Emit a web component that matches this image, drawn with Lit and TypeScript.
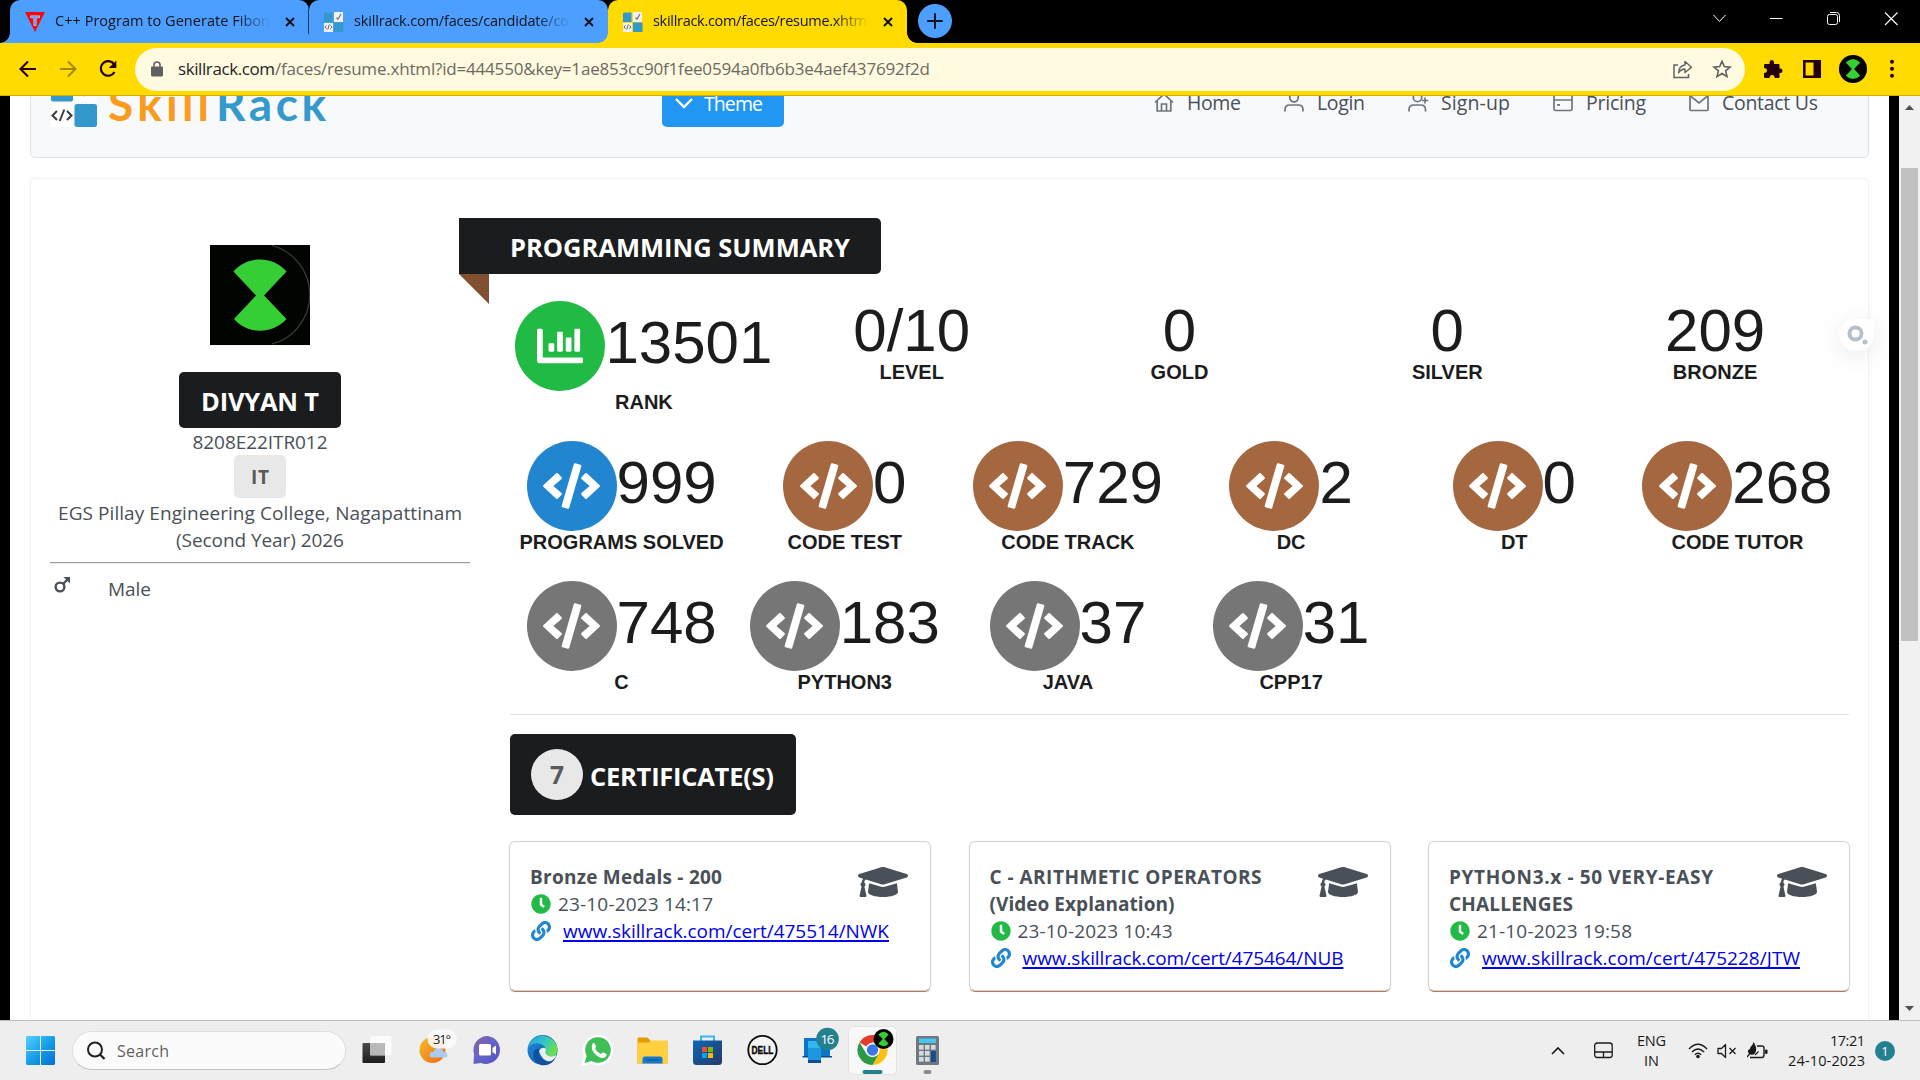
import { LitElement, html, svg, css, nothing } from "lit";
import { customElement, property } from "lit/decorators.js";

/* One line of text, spaced out or tightened to a given advance width. */
@customElement("fit-text")
class FitText extends LitElement {
  @property() text = "";
  @property({ type: Number }) width = 0;
  static styles = css`
    :host { display: inline-block; white-space: pre; }
    :host([underline]) span { text-decoration: underline; text-decoration-thickness: 2px; text-underline-offset: 2px; text-decoration-skip-ink: none; }
  `;
  render() {
    return html`<span>${this.text}</span>`;
  }
  firstUpdated() {
    const span = this.renderRoot.querySelector("span") as HTMLElement;
    const natural = span.getBoundingClientRect().width;
    const gap = (this.width - natural) / Math.max(1, this.text.length - 1);
    span.style.letterSpacing = `${gap.toFixed(3)}px`;
    span.style.marginRight = `${(-gap).toFixed(3)}px`;
  }
}

const fit = (text: string, width: number, underline = false) =>
  html`<fit-text .text=${text} .width=${width} ?underline=${underline}></fit-text>`;

const codePath =
  "M278.9 511.5l-61-17.7c-6.4-1.8-10-8.5-8.2-14.9L346.2 8.7c1.8-6.4 8.5-10 14.9-8.2l61 17.7c6.4 1.8 10 8.5 8.2 14.9L293.8 503.3c-1.9 6.4-8.5 10.1-14.9 8.2zm-114-112.2l43.5-46.4c4.6-4.9 4.3-12.7-.8-17.2L117 256l90.6-79.7c5.1-4.5 5.5-12.3.8-17.2l-43.5-46.4c-4.5-4.8-12.1-5.1-17-.5L3.8 247.2c-5.1 4.7-5.1 12.8 0 17.5l144.1 135.1c4.9 4.6 12.5 4.4 17-.5zm327.2.6l144.1-135.1c5.1-4.7 5.1-12.8 0-17.5L492.1 112.1c-4.8-4.5-12.4-4.3-17 .5L431.6 159c-4.6 4.9-4.3 12.7.8 17.2L523 256l-90.6 79.7c-5.1 4.5-5.5 12.3-.8 17.2l43.5 46.4c4.5 4.9 12.1 5.1 17 .6z";
const chartPath =
  "M332.8 320h38.4c6.4 0 12.8-6.4 12.8-12.8V172.8c0-6.4-6.4-12.8-12.8-12.8h-38.4c-6.4 0-12.8 6.4-12.8 12.8v134.4c0 6.4 6.4 12.8 12.8 12.8zm96 0h38.4c6.4 0 12.8-6.4 12.8-12.8V76.8c0-6.4-6.4-12.8-12.8-12.8h-38.4c-6.4 0-12.8 6.4-12.8 12.8v230.400c0 6.4 6.4 12.8 12.8 12.8zm-288 0h38.4c6.4 0 12.8-6.4 12.8-12.8v-70.400c0-6.4-6.4-12.8-12.8-12.8h-38.4c-6.4 0-12.8 6.4-12.8 12.8v70.400c0 6.4 6.4 12.8 12.8 12.8zm96 0h38.4c6.4 0 12.8-6.4 12.8-12.8V108.800c0-6.4-6.4-12.8-12.8-12.8h-38.4c-6.4 0-12.8 6.4-12.8 12.8v198.400c0 6.4 6.4 12.8 12.8 12.8zM496 384H64V80c0-8.840-7.160-16-16-16H16C7.160 64 0 71.160 0 80v336c0 17.670 14.330 32 32 32h464c8.840 0 16-7.160 16-16v-32c0-8.840-7.160-16-16-16z";
const capPath =
  "M622.34 153.2L343.4 67.5c-15.2-4.67-31.6-4.67-46.79 0L17.66 153.2c-23.54 7.23-23.54 38.36 0 45.59l48.63 14.94c-10.67 13.19-17.23 29.28-17.88 46.9C38.78 266.15 32 276.11 32 288c0 10.78 5.68 19.85 13.86 25.65L20.33 428.53C18.11 438.52 25.71 448 35.94 448h56.11c10.24 0 17.84-9.48 15.62-19.47L82.14 313.65C90.32 307.85 96 298.78 96 288c0-11.57-6.47-21.25-15.66-26.87.76-15.02 8.44-28.3 20.69-36.72L296.6 284.5c9.06 2.78 26.44 6.25 46.79 0l278.95-85.7c23.55-7.24 23.55-38.36 0-45.6zM352.79 315.09c-28.53 8.76-52.84 3.92-65.59 0l-145.02-44.55L128 384c0 35.35 85.96 64 192 64s192-28.65 192-64l-14.18-113.47-145.03 44.56z";
const clockPath =
  "M256,8C119,8,8,119,8,256S119,504,256,504,504,393,504,256,393,8,256,8Zm92.49,313h0l-20,25a16,16,0,0,1-22.49,2.5h0l-67-49.72a40,40,0,0,1-15-31.23V112a16,16,0,0,1,16-16h32a16,16,0,0,1,16,16V256l58,42.5A16,16,0,0,1,348.49,321Z";
const linkPath =
  "M326.612 185.391c59.747 59.809 58.927 155.698.36 214.59-.11.12-.24.25-.36.37l-67.2 67.2c-59.27 59.27-155.699 59.262-214.96 0-59.27-59.26-59.27-155.7 0-214.96l37.106-37.106c9.84-9.84 26.786-3.3 27.294 10.606.648 17.722 3.826 35.527 9.69 52.721 1.986 5.822.567 12.262-3.783 16.612l-13.087 13.087c-28.026 28.026-28.905 73.66-1.155 101.96 28.024 28.579 74.086 28.749 102.325.51l67.2-67.19c28.191-28.191 28.073-73.757 0-101.83-3.701-3.694-7.429-6.564-10.341-8.569a16.037 16.037 0 0 1-6.947-12.606c-.396-10.567 3.348-21.456 11.698-29.806l21.054-21.055c5.521-5.521 14.182-6.199 20.584-1.731a152.482 152.482 0 0 1 20.522 17.197zM467.547 44.449c-59.261-59.262-155.69-59.27-214.96 0l-67.2 67.2c-.12.12-.25.25-.36.37-58.566 58.892-59.387 154.781.36 214.59a152.454 152.454 0 0 0 20.521 17.196c6.402 4.468 15.064 3.789 20.584-1.731l21.054-21.055c8.35-8.35 12.094-19.239 11.698-29.806a16.037 16.037 0 0 0-6.947-12.606c-2.912-2.005-6.64-4.875-10.341-8.569-28.073-28.073-28.191-73.639 0-101.83l67.2-67.19c28.239-28.239 74.3-28.069 102.325.51 27.75 28.3 26.872 73.934-1.155 101.96l-13.087 13.087c-4.35 4.35-5.769 10.79-3.783 16.612 5.864 17.194 9.042 34.999 9.69 52.721.509 13.906 17.454 20.446 27.294 10.606l37.106-37.106c59.271-59.259 59.271-155.699.001-214.959z";

const hourglass = svg`<path d="M24 27Q50 1 76 27L54 50L76 74Q50 98 24 74L46 50Z" fill="#35cf35"/>`;

const closeX = html`<svg class="x" width="10" height="10" viewBox="0 0 10 10"><path d="M1 1L9 9M9 1L1 9" stroke="#10131a" stroke-width="2" fill="none"/></svg>`;

const skillFavicon = html`<svg width="20" height="20" viewBox="0 0 20 20">
  <path d="M0 10V2Q0 .5 1.5 .5H8.5V10Z" fill="#3399cc"/><path d="M10 0H19V10H10Z" fill="#f2f2f0"/>
  <path d="M12.500 5.500L14 7.200L17 2" stroke="#777" stroke-width="1.300" fill="none"/>
  <path d="M0 11H9V20H0Z" fill="#f2f2f0"/><path d="M2.500 13.500L.9 15L2.500 16.800M6.500 13.500L8.100 15L6.500 16.800M5.300 12.500L3.800 17.500" stroke="#666" stroke-width="1" fill="none"/>
  <path d="M10 10.500H19.500V20H11Q10 20 10 19Z" fill="#3399cc"/></svg>`;

const tFavicon = html`<svg width="20" height="20" viewBox="0 0 20 20"><path d="M0 0H20L10 20Z" fill="#f5090f"/>
  <path d="M5.500 3.800H14.500V5.800H11.200V13.500H8.800V5.800H5.500Z" fill="#4c9eff" stroke="#cfe0ff" stroke-width=".6"/></svg>`;

const navIcons = {
  home: svg`<path d="M1 10.5L10 2L19 10.5M3.2 9V19H16.8V9M7.5 19V12H12.5V19"/>`,
  user: svg`<circle cx="10" cy="5.5" r="4.3"/><path d="M1 19.5V17.5Q1 13 6 13H14Q19 13 19 17.5V19.5"/>`,
  userPlus: svg`<circle cx="9.500" cy="5.500" r="4.200"/><path d="M1 19.500V17.500Q1 13 6 13H12.500Q17.500 13 17.500 17.500V19.500M17 5.500V11.500M14 8.500H20.200"/>`,
  card: svg`<rect x="1" y="2" width="18" height="16.500" rx="1.500"/><path d="M1 8H19M4 12.800H7"/>`,
  mail: svg`<rect x="1" y="2.500" width="18" height="16" rx="1"/><path d="M1.500 4L10 11L18.500 4"/>`,
};

interface Stat { value: string; label: string; tone?: string; chart?: boolean }

const summary: Stat[][] = [
  [
    { value: "13501", label: "RANK", tone: "green", chart: true },
    { value: "0/10", label: "LEVEL" },
    { value: "0", label: "GOLD" },
    { value: "0", label: "SILVER" },
    { value: "209", label: "BRONZE" },
  ],
  [
    { value: "999", label: "PROGRAMS SOLVED", tone: "blue" },
    { value: "0", label: "CODE TEST", tone: "brown" },
    { value: "729", label: "CODE TRACK", tone: "brown" },
    { value: "2", label: "DC", tone: "brown" },
    { value: "0", label: "DT", tone: "brown" },
    { value: "268", label: "CODE TUTOR", tone: "brown" },
  ],
  [
    { value: "748", label: "C", tone: "grey" },
    { value: "183", label: "PYTHON3", tone: "grey" },
    { value: "37", label: "JAVA", tone: "grey" },
    { value: "31", label: "CPP17", tone: "grey" },
  ],
];

interface Cert { title: [string, number][]; date: string; url: string; urlWidth: number }

const certs: Cert[] = [
  { title: [["Bronze Medals - 200", 192]], date: "23-10-2023 14:17", url: "www.skillrack.com/cert/475514/NWK", urlWidth: 326 },
  { title: [["C - ARITHMETIC OPERATORS", 272], ["(Video Explanation)", 185]], date: "23-10-2023 10:43", url: "www.skillrack.com/cert/475464/NUB", urlWidth: 321 },
  { title: [["PYTHON3.x - 50 VERY-EASY", 264], ["CHALLENGES", 124]], date: "21-10-2023 19:58", url: "www.skillrack.com/cert/475228/JTW", urlWidth: 318 },
];

@customElement("stat-item")
class StatItem extends LitElement {
  @property({ attribute: false }) stat!: Stat;
  static styles = css`
    :host { display: flex; flex-direction: column; align-items: center; font-family: "Liberation Sans", Arial, sans-serif; color: #1b1c1d; }
    .row { display: flex; align-items: center; }
    .circle { width: 90px; height: 90px; border-radius: 50%; display: flex; align-items: center; justify-content: center; }
    .green { background: #21ba45; }
    .blue { background: #2185d0; }
    .brown { background: #a5673f; }
    .grey { background: #767676; }
    .value { font-size: 60px; line-height: 60px; }
    .circle + .value { padding-bottom: 6px; }
    .label { font-size: 20px; line-height: 22px; font-weight: 700; white-space: nowrap; }
    .ico { fill: #fff; }
  `;
  render() {
    const { value, label, tone, chart } = this.stat;
    return html`
      <div class="row">
        ${tone
          ? html`<div class="circle ${tone}">
              ${chart
                ? html`<svg class="ico" width="46" height="46" viewBox="0 0 512 512"><path d=${chartPath} /></svg>`
                : html`<svg class="ico" width="57" height="46" viewBox="0 0 640 512"><path d=${codePath} /></svg>`}
            </div>`
          : nothing}
        <div class="value">${value}</div>
      </div>
      <div class="label">${label}</div>
    `;
  }
}

@customElement("cert-card")
class CertCard extends LitElement {
  @property({ attribute: false }) cert!: Cert;
  static styles = css`
    :host { display: flex; justify-content: space-between; box-sizing: border-box; height: 148px; padding: 20px 22px 0 20px; background: #fff; border-radius: 5px;
      box-shadow: 0 0 0 1px #d4d4d5, 0 2px 0 0 #b27a56, 0 1px 3px 0 #d4d4d5; color: #495057; font-size: 19px; line-height: 27px; white-space: nowrap; }
    .title { font-weight: 700; }
    .text { width: 326px; padding-top: 1.5px; }
    .line { display: flex; align-items: center; height: 27px; }
    .clock { fill: #21ba45; margin: 0 7px 0 1px; }
    .chain { fill: #2185d0; margin: 0 12px 0 1px; }
    .link { color: #0000ee; }
    .cap { fill: #495057; }
    .aside { width: 50px; flex: none; }
    svg { flex: none; display: block; }
  `;
  render() {
    const c = this.cert;
    return html`
      <div class="text">
        ${c.title.map(([t, w]) => html`<div class="title line">${fit(t, w)}</div>`)}
        <div class="line"><svg class="clock" width="20" height="20" viewBox="0 0 512 512"><path d=${clockPath} /></svg>${fit(c.date, 155)}</div>
        <div class="line"><svg class="chain" width="20" height="20" viewBox="0 0 512 512"><path d=${linkPath} /></svg><a class="link">${fit(c.url, c.urlWidth, true)}</a></div>
      </div>
      <div class="aside"><svg class="cap" width="50" height="40" viewBox="0 0 640 512"><path d=${capPath} /></svg></div>
    `;
  }
}

@customElement("browser-chrome")
class BrowserChrome extends LitElement {
  static styles = css`
    :host { display: block; background: #000; height: 96px; overflow: hidden; color: #10131a; }
    .strip { display: flex; height: 43px; }
    .tabs { display: flex; padding-left: 10px; }
    .tab { position: relative; box-sizing: border-box; width: 299px; height: 43px; background: #4c9eff; border-radius: 10px 10px 0 0; display: flex; align-items: center; padding: 0 14px 0 15px; font-size: 14.5px; }
    .tab .name { margin: -2px 0 0 10px; width: 216px; overflow: hidden; line-height: 20px; -webkit-mask-image: linear-gradient(90deg, #000 84%, transparent 100%); mask-image: linear-gradient(90deg, #000 84%, transparent 100%); }
    .tab .x { margin-left: auto; }
    .first::before { content: ""; position: absolute; left: -10px; bottom: 0; width: 10px; height: 10px; background: radial-gradient(circle at 0 0, transparent 9.5px, #4c9eff 10px); }
    .second::before { content: ""; position: absolute; left: -1px; top: 9px; width: 1px; height: 25px; background: #1d3c60; }
    .active { background: #ffdb00; z-index: 1; }
    .active::before { content: ""; position: absolute; left: -10px; bottom: 0; width: 10px; height: 10px; background: radial-gradient(circle at 0 0, transparent 9.5px, #ffdb00 10px); }
    .active::after { content: ""; position: absolute; right: -10px; bottom: 0; width: 10px; height: 10px; background: radial-gradient(circle at 100% 0, transparent 9.5px, #ffdb00 10px); }
    .plus { width: 34px; height: 34px; margin: 4px 0 0 11px; border-radius: 50%; background: #4c9eff; display: flex; align-items: center; justify-content: center; }
    .wins { margin-left: auto; display: flex; padding: 10px 20px 0 0; gap: 39px; }
    .bar { box-sizing: border-box; display: flex; align-items: center; height: 53px; background: #ffdb00; border-bottom: 1px solid #cfb200; padding: 0 19px 0 18px; }
    .left { display: flex; gap: 20px; width: 117px; }
    .pill { width: 1610px; box-sizing: border-box; height: 43px; border-radius: 22px; background: #fffae0; display: flex; align-items: center; padding: 0 13px 0 16px; font-size: 17px; color: #6c6a60; }
    .url { display: flex; margin-top: -2px; }
    .lock { margin-right: 15px; }
    .host { color: #1f1f1f; }
    .end { margin-left: auto; display: flex; gap: 19px; }
    .tools { display: flex; align-items: center; margin-left: 18px; }
    .puzzle { margin-right: 19px; }
    .panel { margin-right: 17px; }
    .avatar { margin-right: 22px; }
    svg { display: block; flex: none; }
  `;
  render() {
    return html`
      <div class="strip">
        <div class="tabs">
          <div class="tab first">${tFavicon}<div class="name">${fit("C++ Program to Generate Fibon", 215)}</div>${closeX}</div>
          <div class="tab second">${skillFavicon}<div class="name">${fit("skillrack.com/faces/candidate/co", 215)}</div>${closeX}</div>
          <div class="tab active">${skillFavicon}<div class="name">${fit("skillrack.com/faces/resume.xhtm", 214)}</div>${closeX}</div>
        </div>
        <div class="plus"><svg width="16" height="16" viewBox="0 0 16 16"><path d="M8 1V15M1 8H15" stroke="#10131a" stroke-width="2" stroke-linecap="round"/></svg></div>
        <div class="wins">
          <svg width="18" height="18" viewBox="0 0 18 18"><path d="M2.500 5L8.500 11.500L14.500 5" stroke="#fff" stroke-width="1" fill="none"/></svg>
          <svg width="18" height="18" viewBox="0 0 18 18"><path d="M2 8.500H14.500" stroke="#fff" stroke-width="1"/></svg>
          <svg width="18" height="18" viewBox="0 0 18 18"><rect x="2.500" y="4.500" width="10" height="10" rx="2" stroke="#fff" fill="none"/><path d="M5 2.500H11.500Q14.500 2.500 14.500 5.500V12" stroke="#fff" fill="none"/></svg>
          <svg width="18" height="18" viewBox="0 0 18 18"><path d="M3 2.500L15.500 15M15.500 2.500L3 15" stroke="#fff" stroke-width="1.100"/></svg>
        </div>
      </div>
      <div class="bar">
        <div class="left">
          <svg width="20" height="20" viewBox="0 0 20 20"><path d="M18 10H3M10 2.500L2.500 10L10 17.500" stroke="#24000e" stroke-width="2.100" fill="none"/></svg>
          <svg width="20" height="20" viewBox="0 0 20 20"><path d="M2 10H17M10 2.500L17.500 10L10 17.500" stroke="#a38a05" stroke-width="2.100" fill="none"/></svg>
          <svg width="20" height="20" viewBox="0 0 20 20"><path d="M16.300 5.500A7.300 7.300 0 1 0 16.500 13" stroke="#24000e" stroke-width="2.200" fill="none"/><path d="M18.300 1.500V9H10.800Z" fill="#24000e"/></svg>
        </div>
        <div class="pill">
          <svg class="lock" width="12" height="16" viewBox="0 0 12 16"><path d="M0 6.500Q0 5.500 1 5.500H11Q12 5.500 12 6.500V14Q12 15.500 10.500 15.500H1.500Q0 15.500 0 14Z" fill="#5f6064"/><path d="M3 6V3.800Q3 1 6 1Q9 1 9 3.800V6" stroke="#5f6064" stroke-width="1.600" fill="none"/></svg>
          <div class="url"><span class="host">${fit("skillrack.com", 97)}</span>${fit("/faces/resume.xhtml?id=444550&key=1ae853cc90f1fee0594a0fb6b3e4aef437692f2d", 655)}</div>
          <div class="end">
            <svg width="20" height="20" viewBox="0 0 20 20"><path d="M5 6H1V18.500H15.500V15" stroke="#5f6064" stroke-width="1.500" fill="none"/><path d="M5.500 14Q6 6.500 12 6V2.500L18.500 8.200L12 13.500V10Q8 10 5.500 14Z" stroke="#5f6064" stroke-width="1.400" fill="none" stroke-linejoin="round"/></svg>
            <svg width="20" height="20" viewBox="0 0 20 20"><path d="M10 2.200L12.300 7.600L18 8.100L13.600 11.900L15 17.600L10 14.500L5 17.600L6.400 11.900L2 8.100L7.700 7.600Z" stroke="#5f6064" stroke-width="1.600" fill="none"/></svg>
          </div>
        </div>
        <div class="tools">
          <svg class="puzzle" width="20" height="20" viewBox="0 0 20 20"><path d="M2 5H6.500V3.500Q6.500 1 8.800 1Q11 1 11 3.500V5H15.500Q16.500 5 16.500 6V9.500H17.300Q19.500 9.500 19.500 11.700Q19.500 14 17.300 14H16.500V18Q16.500 19 15.500 19H11.800Q11.500 16 9.200 16Q6.800 16 6.500 19H2Q1 19 1 18V14Q4 13.800 4 11.500Q4 9.200 1 9V6Q1 5 2 5Z" fill="#24000e"/></svg>
          <svg class="panel" width="20" height="20" viewBox="0 0 20 20"><path d="M1 1H19V19H1ZM3.600 3.600V16.400H11.500V3.600Z" fill="#24000e" fill-rule="evenodd"/></svg>
          <svg class="avatar" width="28" height="28" viewBox="0 0 100 100"><circle cx="50" cy="50" r="50" fill="#000"/>${hourglass}</svg>
          <svg width="6" height="20" viewBox="0 0 6 20"><circle cx="3" cy="2.800" r="2" fill="#24000e"/><circle cx="3" cy="9.800" r="2" fill="#24000e"/><circle cx="3" cy="16.800" r="2" fill="#24000e"/></svg>
        </div>
      </div>
    `;
  }
}

@customElement("site-header")
class SiteHeader extends LitElement {
  static styles = css`
    :host { display: flex; align-items: center; box-sizing: border-box; height: 109px; margin-top: -47px; padding: 0 50px 0 20px; background: #f8f9fb; border: 1px solid #dee2e6; border-radius: 5px; color: #495057; font-size: 19.5px; }
    .mark { margin-right: 10px; }
    .word { display: flex; width: 554px; font: 700 46px/46px "Lato", sans-serif; }
    .skill { color: #f99b1c; margin-right: 7px; }
    .rack { color: #3499cd; }
    .theme { box-sizing: border-box; width: 122px; height: 47px; border-radius: 5px; background: #2196f3; color: #fff; display: flex; align-items: center; padding-left: 12px; gap: 10px; font-weight: 500; }
    nav { margin: -2px 0 0 auto; display: flex; gap: 43px; }
    .item { display: flex; align-items: center; gap: 13px; line-height: 27px; }
    .ico { stroke: #6c757d; fill: none; stroke-width: 1.700; margin-top: -2px; overflow: visible; }
    svg { display: block; flex: none; }
  `;
  private item(icon: unknown, text: string, width: number) {
    return html`<div class="item"><svg class="ico" width="20" height="20" viewBox="0 0 20 20">${icon}</svg>${fit(text, width)}</div>`;
  }
  render() {
    return html`
      <svg class="mark" width="47" height="47" viewBox="0 0 47 47">
        <rect x="0" y="0" width="22" height="21.500" rx="2" fill="#3399cc"/><rect x="24" y="0" width="22" height="21.500" fill="#fff"/>
        <path d="M29 8L33 14.500L42 2" stroke="#555" stroke-width="2.400" fill="none"/>
        <rect x="0" y="23.500" width="22" height="23.500" fill="#fff"/>
        <path d="M6 31L1.500 35.500L6 40M16 31L20.500 35.500L16 40M13.300 29.500L8.700 41" stroke="#3d3d3d" stroke-width="2" fill="none"/>
        <rect x="23.500" y="24" width="22.500" height="23" rx="2.500" fill="#3399cc"/></svg>
      <div class="word"><span class="skill">${fit("Skill", 101)}</span><span class="rack">${fit("Rack", 110)}</span></div>
      <div class="theme"><svg width="20" height="20" viewBox="0 0 20 20"><path d="M2 5L10 13L18 5" stroke="#fff" stroke-width="2.400" fill="none"/></svg>${fit("Theme", 59)}</div>
      <nav>
        ${this.item(navIcons.home, "Home", 54)}
        ${this.item(navIcons.user, "Login", 48)}
        ${this.item(navIcons.userPlus, "Sign-up", 69)}
        ${this.item(navIcons.card, "Pricing", 60)}
        ${this.item(navIcons.mail, "Contact Us", 96)}
      </nav>
    `;
  }
}

@customElement("profile-panel")
class ProfilePanel extends LitElement {
  static styles = css`
    :host { display: flex; flex-direction: column; align-items: center; width: 420px; padding-top: 66px; color: #495057; font-size: 19px; line-height: 29px; }
    .photo { display: block; margin-bottom: 27px; }
    .name { width: 162px; height: 56px; line-height: 58px; border-radius: 5px; background: #1b1c1d; color: #fff; font-size: 25.5px; font-weight: 700; text-align: center; }
    .line { height: 27px; }
    .dept { width: 52px; height: 43px; line-height: 45px; margin-bottom: 1px; border-radius: 5px; background: #e8e8e8; color: #595959; font-weight: 700; text-align: center; }
    .rule { align-self: stretch; height: 1px; margin-top: 9px; background: #9a9a9a; border-bottom: 1px solid #ededed; }
    .gender { align-self: stretch; display: flex; padding: 11px 0 0 4px; }
    .male { margin: 2px 38px 0 0; }
  `;
  render() {
    return html`
      <svg class="photo" width="100" height="100" viewBox="0 0 100 100">
        <rect width="100" height="100" fill="#020402"/><path d="M62 0.500A51 51 0 0 1 62 99" stroke="#3a3e3a" stroke-width="1.200" fill="none"/>
        <path d="M23.500 26.500C37 10.500 63 10.500 76.500 26.500L54 50.500L76.500 74C63 89.500 37 89.500 24 74L46 50.500Z" fill="#35cf35"/>
      </svg>
      <div class="name">${fit("DIVYAN T", 118)}</div>
      <div class="line">${fit("8208E22ITR012", 135)}</div>
      <div class="dept">${fit("IT", 18)}</div>
      <div class="line">${fit("EGS Pillay Engineering College, Nagapattinam", 404)}</div>
      <div class="line">${fit("(Second Year) 2026", 168)}</div>
      <div class="rule"></div>
      <div class="gender">
        <svg class="male" width="16" height="16" viewBox="0 0 16 16"><circle cx="6" cy="10" r="4.400" stroke="#495057" stroke-width="2.400" fill="none"/><path d="M9 7L13.500 2.500" stroke="#495057" stroke-width="2.400"/><path d="M9.500 0H16V6.500Z" fill="#495057"/></svg>
        ${fit("Male", 43)}
      </div>
    `;
  }
}

@customElement("task-bar")
class TaskBar extends LitElement {
  static styles = css`
    :host { display: flex; align-items: center; box-sizing: border-box; height: 60px; background: #eee; border-top: 1px solid #bdbdbd; padding: 0 25px 0 26px; font-size: 15px; color: #1b1b1b; }
    svg { display: block; flex: none; }
    .search { box-sizing: border-box; width: 274px; height: 39px; margin-left: 17px; border-radius: 20px; background: #fbfbfb; border: 1px solid #dedede; border-bottom-color: #c4c4c4; display: flex; align-items: center; padding-left: 13px; gap: 11px; font-size: 16px; color: #5f5f5f; }
    .apps { display: flex; margin-left: 4px; }
    .app { width: 55px; height: 59px; display: flex; align-items: center; justify-content: center; }
    .tray { margin-left: auto; display: flex; align-items: center; }
    .pad { margin-left: 29px; }
    .two { display: flex; flex-direction: column; line-height: 20px; font-size: 14.500px; }
    .lang { align-items: center; margin: 0 22px 0 24px; }
    .time { align-items: flex-end; margin: 0 10px 0 20px; }
    .net { display: flex; gap: 9px; align-items: center; }
    .note { width: 20px; height: 20px; border-radius: 50%; background: #23808f; color: #fff; font-size: 13px; line-height: 20px; text-align: center; }
    .tiny { font: 13px "Open Sans", sans-serif; }
    .badge { font: 13.500px "Open Sans", sans-serif; }
    .dell { font: 900 10px "Liberation Sans", sans-serif; }
  `;
  private app(body: unknown) {
    return html`<div class="app"><svg width="55" height="59" viewBox="0 0 55 59">${body}</svg></div>`;
  }
  render() {
    return html`
      <svg width="29" height="29" viewBox="0 0 29 29">
        <defs><linearGradient id="w" x1="0" y1="0" x2="1" y2="1"><stop offset="0" stop-color="#52d3ff"/><stop offset=".55" stop-color="#1499e6"/><stop offset="1" stop-color="#0070d0"/></linearGradient></defs>
        <path d="M1 0H14V14H0V1ZM15 0H28L29 1V14H15ZM0 15H14V29H1L0 28ZM15 15H29V28L28 29H15Z" fill="url(#w)"/></svg>
      <div class="search">
        <svg width="20" height="20" viewBox="0 0 20 20"><circle cx="9" cy="8.500" r="7" stroke="#222" stroke-width="2" fill="none"/><path d="M14 13.500L18.500 18" stroke="#222" stroke-width="2.300"/></svg>${fit("Search", 52)}
      </div>
      <div class="apps">
        ${this.app(svg`<defs><linearGradient id="tv" x1="0" y1="0" x2="0" y2="1"><stop offset="0" stop-color="#4a4a48"/><stop offset="1" stop-color="#1c1c1c"/></linearGradient></defs>
          <rect x="12.500" y="22" width="22.500" height="20" rx="1" fill="url(#tv)"/><rect x="20" y="15" width="21.500" height="19.500" rx="1" fill="#fff" opacity=".75"/><rect x="20" y="22" width="15" height="12.500" fill="#aaa" opacity=".6"/>`)}
        ${this.app(svg`<defs><linearGradient id="sun" x1="0" y1="0" x2="1" y2="1"><stop offset="0" stop-color="#f2c12f"/><stop offset="1" stop-color="#f0650f"/></linearGradient></defs>
          <circle cx="27.500" cy="29" r="13" fill="url(#sun)"/><path d="M28 36.500Q24 36.500 24.500 33Q25.500 30.500 28.500 31Q30 26.500 34.500 27Q38 27.500 38.500 31Q42.500 31 42.500 34Q42.500 36.500 39.500 36.500Z" fill="#a9cbf5"/>
          <rect x="22.500" y="8.500" width="29.500" height="19" rx="9.500" fill="#fafafa" opacity=".9"/><text class="tiny" x="28" y="23" textLength="18" fill="#222">31°</text>`)}
        ${this.app(svg`<defs><linearGradient id="ch" x1="0" y1="0" x2="1" y2="1"><stop offset="0" stop-color="#8c62a8"/><stop offset=".5" stop-color="#6264c8"/><stop offset="1" stop-color="#5353c0"/></linearGradient></defs>
          <path d="M27.500 15A14 14 0 1 1 21 42L13.500 43L14 33A14 14 0 0 1 27.500 15Z" fill="url(#ch)"/><rect x="19" y="23" width="12" height="11.500" rx="1.500" fill="#fff"/><path d="M32.500 27L36 24.500V33.500L32.500 31Z" fill="#fff"/>`)}
        ${this.app(svg`<defs><linearGradient id="e1" x1="0" y1="0" x2="1" y2=".4"><stop offset="0" stop-color="#2aa0e0"/><stop offset=".6" stop-color="#36c5c5"/><stop offset="1" stop-color="#67df4f"/></linearGradient><linearGradient id="e2" x1="0" y1="0" x2="1" y2="1"><stop offset="0" stop-color="#1e8fdc"/><stop offset="1" stop-color="#0d4fa0"/></linearGradient></defs>
          <circle cx="27.500" cy="29" r="15" fill="url(#e2)"/><path d="M12.800 27A15 15 0 0 1 42.500 29Q42 36 34.500 36Q29.500 36 30.500 32Q32 24 24 22.500Q17 21.500 12.800 27Z" fill="url(#e1)"/><path d="M24 30Q27 24.500 31 28Q29 34 35 35.500Q39 35.800 41.500 33.500Q40 39 35 40.500Q27 40 24 30Z" fill="#eee"/><path d="M24 28Q22 38 32 41Q36.500 41.500 41 36Q36 46 26 44Q18 41 18.500 32Q20 27 24 28Z" fill="#10509c"/>`)}
        ${this.app(svg`<path d="M13 43.500L15.500 35A13.800 13.800 0 1 1 21 41Z" fill="#fff" stroke="#fff" stroke-width="3" stroke-linejoin="round"/><path d="M14.500 42L16.700 35A12.800 12.800 0 1 1 21.500 40Z" fill="#40bf57"/>
          <path d="M22.500 22.500Q24.500 21 25.500 24L26 26Q25 27.500 25.500 28.500Q27.500 32 31 33Q32.500 31 33.500 31.500L36.500 33Q37 36 33 37Q30 37.500 25.500 33.500Q20 28 22.500 22.500Z" fill="#fff"/>`)}
        ${this.app(svg`<path d="M12.500 17.500Q12.500 16.500 13.500 16.500H22Q24 17 25.500 20H42.500V42.500H12.500Z" fill="#e09d08"/><path d="M12.500 21.500H24L26 19.500H42.500V42.500H12.500Z" fill="#ffcf3f"/><path d="M17.500 42.500V38Q17.500 35.500 20 35.500H35Q37.500 35.500 37.500 38V42.500Z" fill="#1479d0"/><path d="M21 39H34" stroke="#0b4f94"/>`)}
        ${this.app(svg`<defs><linearGradient id="st" x1="0" y1="0" x2="1" y2="1"><stop offset="0" stop-color="#0b66b8"/><stop offset="1" stop-color="#263a68"/></linearGradient></defs>
          <path d="M21 20V15.500H34V20" stroke="#38b8f2" stroke-width="2" fill="none"/><path d="M13 19.500H42V40.500Q42 44 38.500 44H16.500Q13 44 13 40.500Z" fill="url(#st)"/>
          <rect x="22" y="26" width="5" height="5" fill="#f25022"/><rect x="28" y="26" width="5" height="5" fill="#7fba00"/><rect x="22" y="32" width="5" height="5" fill="#00a4ef"/><rect x="28" y="32" width="5" height="5" fill="#ffb900"/>`)}
        ${this.app(svg`<circle cx="27.500" cy="29" r="14.200" fill="#f4f4f4" stroke="#0c0c0c" stroke-width="1.800"/><text class="dell" x="16.500" y="32.800" textLength="22" lengthAdjust="spacingAndGlyphs" fill="#0c0c0c" stroke="#0c0c0c" stroke-width=".4">DELL</text>`)}
        ${this.app(svg`<rect x="14" y="17" width="26" height="18" fill="#0d76c9"/><path d="M12.500 35H42V36.500H12.500Z" fill="#0a4e91"/><rect x="18" y="20" width="13" height="22" rx="1" fill="#1d96e0"/><rect x="18" y="20" width="13" height="7" fill="#31b8ee"/><rect x="18" y="39" width="13" height="3" fill="#0a4e91"/>
          <circle cx="37.500" cy="18" r="11.300" fill="#23808f"/><text class="badge" x="30.500" y="23" textLength="14" fill="#fff">16</text>`)}
        ${this.app(svg`<rect x="3.500" y="5.500" width="48" height="48" rx="5" fill="#f8f8f8" stroke="#e4e4e4"/><path d="M27.500 29L14.500 21.500A15 15 0 0 1 40.500 21.500H27.500Z" fill="#e33b2e"/><path d="M27.500 21.500H40.500A15 15 0 0 1 27.500 44L33 32Z" fill="#fbc116"/><path d="M27.500 29L33.500 33L27.500 44A15 15 0 0 1 14.500 21.500L21 32Z" fill="#2a9a47"/>
          <circle cx="27.500" cy="29" r="7.200" fill="#fff"/><circle cx="27.500" cy="29" r="5.700" fill="#3b78e7"/><g transform="translate(28.500 8) scale(.2)"><circle cx="50" cy="50" r="50" fill="#000"/>${hourglass}</g><rect x="17.500" y="49" width="20" height="4" rx="2" fill="#23808f"/>`)}
        ${this.app(svg`<rect x="16" y="15" width="23" height="29" rx="1.500" fill="#70787f"/><rect x="19" y="17.500" width="17" height="4.500" fill="#45c8ee"/>
          <g fill="#d5dadd"><rect x="19" y="24" width="4.600" height="4.600"/><rect x="25" y="24" width="4.600" height="4.600"/><rect x="31" y="24" width="4.600" height="4.600"/><rect x="19" y="30" width="4.600" height="4.600"/><rect x="25" y="30" width="4.600" height="4.600"/><rect x="19" y="36" width="4.600" height="4.600"/><rect x="25" y="36" width="4.600" height="4.600"/></g><rect x="31" y="30" width="4.800" height="11" fill="#154a8c"/><rect x="23.500" y="49" width="8" height="4" rx="2" fill="#8b8b8b"/>`)}
      </div>
      <div class="tray">
        <svg width="14" height="8" viewBox="0 0 14 8"><path d="M1 7L7 1L13 7" stroke="#1b1b1b" stroke-width="1.700" fill="none"/></svg>
        <svg class="pad" width="19" height="17" viewBox="0 0 19 17"><rect x=".7" y="1" width="17.500" height="14.500" rx="2.500" stroke="#1b1b1b" stroke-width="1.300" fill="none"/><path d="M.7 10H18.200M9.500 10V15.500" stroke="#1b1b1b" stroke-width="1.300"/></svg>
        <div class="two lang"><span>${fit("ENG", 29)}</span><span>${fit("IN", 15)}</span></div>
        <div class="net">
          <svg width="20" height="16" viewBox="0 0 20 16"><g stroke="#1b1b1b" stroke-width="1.400" fill="none"><path d="M1 6Q10 -3.500 19 6M4 9Q10 3 16 9M6.800 11.800Q10 8.800 13.200 11.800"/></g><circle cx="10" cy="13.500" r="1.800" fill="#1b1b1b"/></svg>
          <svg width="21" height="16" viewBox="0 0 21 16"><path d="M1 5.500H4.500L8.500 1.500V14.500L4.500 10.500H1Z" stroke="#1b1b1b" stroke-width="1.300" fill="none" stroke-linejoin="round"/><path d="M12.500 5L18.500 11M18.500 5L12.500 11" stroke="#1b1b1b" stroke-width="1.300"/></svg>
          <svg width="21" height="18" viewBox="0 0 21 18"><path d="M10 4H15Q17 4 17 6V12.500Q17 15.500 15 15.500H3" stroke="#1b1b1b" stroke-width="1.400" fill="none"/><rect x="18" y="7.500" width="2.500" height="4.500" rx="1" fill="#1b1b1b"/><path d="M6.500 0Q10 5 9 9Q8 13.500 3.500 12.500Q.5 11.500 1 8Q3 8.500 3.500 5Q5.500 4 6.500 0Z" fill="#1b1b1b"/><path d="M0 15L7.500 6M8 13L11.500 9.500" stroke="#1b1b1b" stroke-width="1.200"/></svg>
        </div>
        <div class="two time"><span>${fit("17:21", 35)}</span><span>${fit("24-10-2023", 77)}</span></div>
        <div class="note">1</div>
      </div>
    `;
  }
}

@customElement("app-root")
class AppRoot extends LitElement {
  static styles = css`
    :host { display: flex; flex-direction: column; width: 1920px; height: 1080px; overflow: hidden; background: #fff; font-family: "Open Sans", "Noto Sans", sans-serif; }
    .view { position: relative; display: flex; height: 924px; overflow: hidden; background: #000; padding-left: 10px; gap: 10px; }
    .page { width: 1879px; box-sizing: border-box; padding: 0 20px; background: #fff; overflow: hidden; }
    .card { box-sizing: border-box; height: 900px; margin-top: 20px; border: 1px solid #f3f3f3; border-radius: 5px; display: flex; padding: 0 18px 0 19px; gap: 40px; box-shadow: 0 0 4px rgba(0, 0, 0, 0.03); }
    .main { width: 1339px; padding-top: 39px; }
    .ribbon { position: relative; width: 422px; box-sizing: border-box; height: 56px; line-height: 58px; margin: 0 0 27px -51px; padding-left: 51px; background: #1b1c1d; border-radius: 0 5px 5px 0; color: #fff; font-size: 25.5px; font-weight: 700; }
    .ribbon::after { content: ""; position: absolute; left: 0; top: 100%; border-top: 30px solid #825030; border-left: 30px solid transparent; }
    .grid { display: grid; grid-template-columns: repeat(6, 1fr); margin-bottom: 28px; height: 112px; }
    .five { grid-template-columns: repeat(5, 1fr); }
    .hr { height: 1px; background: #dee2e6; margin: -7px 0 19px; }
    .count { width: 286px; box-sizing: border-box; height: 81px; padding-left: 21px; border-radius: 5px; background: #1b1c1d; color: #fff; display: flex; align-items: center; gap: 7px; font-size: 25.5px; line-height: 34px; font-weight: 700; margin-bottom: 27px; }
    .num { width: 52px; height: 51px; line-height: 52px; border-radius: 50%; background: #e8e8e8; color: #595959; text-align: center; font-size: 24.5px; }
    .caption { padding-top: 2px; }
    .cards { display: grid; grid-template-columns: repeat(3, 1fr); gap: 39.5px; }
    .scroll { box-sizing: border-box; width: 21px; background: #f1f1f1; display: flex; flex-direction: column; align-items: center; padding: 9px 0 9px; }
    .thumb { width: 17px; height: 473px; background: #c1c1c1; margin: 58px 0 auto; }
    .float { position: absolute; left: 1839px; top: 223px; width: 35px; height: 32px; border-radius: 16px 3px 16px 16px; background: #fff; box-shadow: 0 4px 26px rgba(0, 0, 0, 0.09); display: flex; align-items: center; justify-content: center; }
    svg { display: block; flex: none; }
  `;
  render() {
    return html`
      <browser-chrome></browser-chrome>
      <div class="view">
        <div class="page">
          <site-header></site-header>
          <div class="card">
            <profile-panel></profile-panel>
            <div class="main">
              <div class="ribbon">${fit("PROGRAMMING SUMMARY", 340)}</div>
              ${summary.map((row, i) => html`<div class="grid ${i === 0 ? "five" : ""}">${row.map((s) => html`<stat-item .stat=${s}></stat-item>`)}</div>`)}
              <div class="hr"></div>
              <div class="count"><div class="num">7</div><div class="caption">${fit("CERTIFICATE(S)", 184)}</div></div>
              <div class="cards">${certs.map((c) => html`<cert-card .cert=${c}></cert-card>`)}</div>
            </div>
          </div>
        </div>
        <div class="scroll">
          <svg width="9" height="5" viewBox="0 0 9 5"><path d="M0 5L4.500 0L9 5Z" fill="#505050"/></svg>
          <div class="thumb"></div>
          <svg width="9" height="5" viewBox="0 0 9 5"><path d="M0 0L4.500 5L9 0Z" fill="#505050"/></svg>
        </div>
        <div class="float"><svg width="22" height="20" viewBox="0 0 22 20"><circle cx="9.500" cy="8.500" r="6" stroke="#b4c0cc" stroke-width="4" fill="none"/><circle cx="19" cy="17" r="2.500" fill="#b4c0cc"/></svg></div>
      </div>
      <task-bar></task-bar>
    `;
  }
}
